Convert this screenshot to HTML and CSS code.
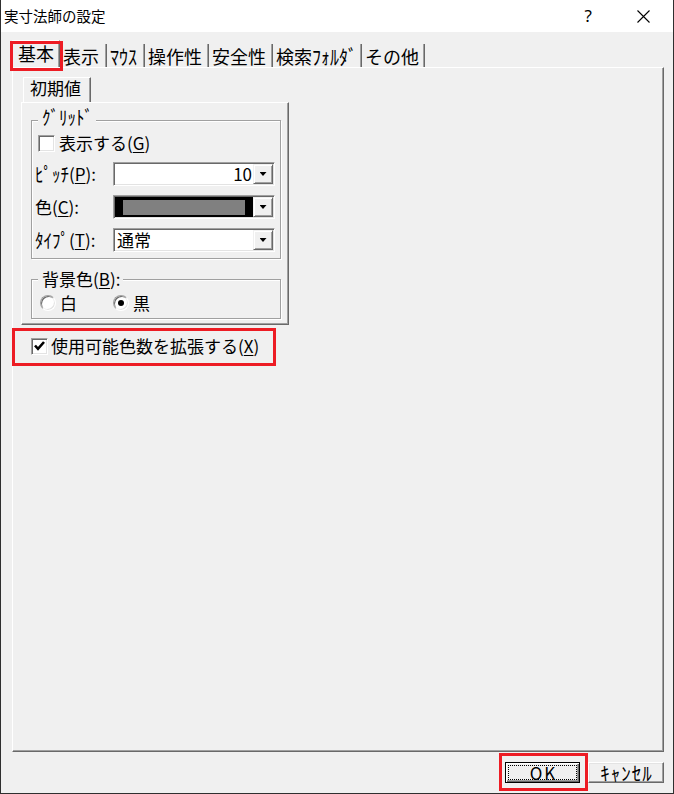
FILE: index.html
```html
<!DOCTYPE html>
<html lang="ja">
<head>
<meta charset="utf-8">
<title>実寸法師の設定</title>
<link rel="stylesheet" href="styles.css">
</head>
<body>
<div class="window">
  <div class="titlebar">
    <span class="title">実寸法師の設定</span>
    <span class="help">?</span>
    <svg class="close" width="13" height="13" viewBox="0 0 13 13"><path d="M0.5 0.5L12.5 12.5M12.5 0.5L0.5 12.5" stroke="#000" stroke-width="1.1" fill="none"/></svg>
  </div>
  <div class="client">
    <div class="tabs">
      <div class="tab active w-basic">基本</div>
      <div class="tab w-disp">表示</div>
      <div class="tab w-mouse"><span class="hw">ﾏｳｽ</span></div>
      <div class="tab w-op">操作性</div>
      <div class="tab w-safe">安全性</div>
      <div class="tab w-search">検索<span class="hw">ﾌｫﾙﾀﾞ</span></div>
      <div class="tab w-other">その他</div>
    </div>
    <div class="panel">
      <div class="subtabs"><div class="subtab">初期値</div></div>
      <div class="subpanel">
        <div class="group grid">
          <span class="group-label gl-grid"><span class="hw">ｸﾞﾘｯﾄﾞ</span></span>
          <div class="check-row">
            <span class="checkbox"></span><span class="check-text">表示する(<u>G</u>)</span>
          </div>
          <div class="field">
            <span class="flabel"><span class="hw">ﾋﾟｯﾁ</span>(<u>P</u>):</span>
            <div class="combo">
              <span class="value num">10</span>
              <span class="drop"></span>
            </div>
          </div>
          <div class="field">
            <span class="flabel">色(<u>C</u>):</span>
            <div class="combo">
              <span class="swatch"><span class="swatch-fill"></span></span>
              <span class="drop"></span>
            </div>
          </div>
          <div class="field">
            <span class="flabel"><span class="hw">ﾀｲﾌﾟ</span>(<u>T</u>):</span>
            <div class="combo">
              <span class="value">通常</span>
              <span class="drop"></span>
            </div>
          </div>
        </div>
        <div class="group bg">
          <span class="group-label gl-bg">背景色(<u>B</u>):</span>
          <div class="radio-row">
            <span class="opt opt-white"><span class="radio"></span><span class="opt-text">白</span></span>
            <span class="opt"><span class="radio on"></span><span class="opt-text">黒</span></span>
          </div>
        </div>
      </div>
      <div class="check-row ext">
        <span class="checkbox checked"><svg width="13" height="12" viewBox="0 0 13 12"><path d="M2 5.5L5 8.8L11 2" fill="none" stroke="#000" stroke-width="2.6"/></svg></span><span class="check-text">使用可能色数を拡張する(<u>X</u>)</span>
      </div>
    </div>
    <div class="buttons">
      <div class="btn ok">OK</div>
      <div class="btn cancel">ｷｬﾝｾﾙ</div>
    </div>
  </div>
  <div class="mark mark-tab"></div>
  <div class="mark mark-check"></div>
  <div class="mark mark-ok"></div>
</div>
</body>
</html>
```
FILE: styles.css
```css
* { box-sizing: border-box; }
html, body { margin: 0; padding: 0; }
body {
  width: 674px;
  height: 794px;
  overflow: hidden;
  background: #fff;
  font-family: "Noto Sans CJK JP", "Noto Sans", sans-serif;
  color: #000;
}
u { text-decoration-thickness: 1px; text-underline-offset: 2px; }
.hw { display: inline-block; transform: scaleY(1.15); }

.window {
  position: relative;
  width: 674px;
  height: 794px;
  border: 1px solid #2f2f2f;
  border-top: none;
  display: flex;
  flex-direction: column;
  background: #f0f0f0;
}

/* title bar */
.titlebar {
  flex: none;
  height: 32px;
  background: #fff;
  display: flex;
  align-items: center;
}
.title { margin-left: 3px; font-size: 14.5px; line-height: 20px; }
.help {
  margin-left: auto;
  margin-right: 45px;
  font-family: "Noto Sans", sans-serif;
  font-size: 17px;
  line-height: 20px;
}
.close { display: block; margin-right: 23px; }

/* client */
.client {
  flex: 1;
  padding: 8px 9px 0 11px;
  display: flex;
  flex-direction: column;
}

.tabs {
  flex: none;
  display: flex;
  align-items: flex-end;
  height: 27px;
  font-size: 18px;
}
.tab {
  height: 23px;
  padding: 2px 0 0 3px;
  line-height: 21px;
  white-space: nowrap;
  border-right: 1px solid #696969;
  box-shadow: inset -1px 0 0 #a0a0a0;
}
.tab.active {
  height: 27px;
  padding: 1px 0 0 5px;
  line-height: 22px;
  border-left: 1px solid #fff;
  border-top: 1px solid #fff;
}
.w-basic { width: 48px; }
.w-disp { width: 47px; }
.w-mouse { width: 38px; }
.w-op { width: 64px; }
.w-safe { width: 64px; }
.w-search { width: 89px; }
.w-other { width: 63px; }

.panel {
  flex: none;
  width: 652px;
  height: 685px;
  border: 1px solid;
  border-color: #fff #696969 #696969 #fff;
  box-shadow: inset -1px -1px 0 #a0a0a0;
  padding: 9px 0 0 8px;
  font-size: 17px;
}

.subtabs { display: flex; padding-left: 2px; height: 25px; }
.subtab {
  width: 68px;
  height: 25px;
  padding-left: 6px;
  line-height: 20px;
  border-left: 1px solid #fff;
  border-top: 1px solid #fff;
  border-right: 1px solid #696969;
  box-shadow: inset -1px 0 0 #a0a0a0;
}

.subpanel {
  width: 268px;
  border: 1px solid;
  border-color: #fff #696969 #696969 #fff;
  box-shadow: inset -1px -1px 0 #a0a0a0;
  padding: 17px 0 5px 9px;
}

.group {
  position: relative;
  width: 250px;
  border: 1px solid #a0a0a0;
  box-shadow: inset 1px 1px 0 #fff, 1px 1px 0 #fff;
}
.group-label {
  position: absolute;
  left: 6px;
  padding: 0 3px 0 4px;
  background: #f0f0f0;
  line-height: 20px;
  white-space: nowrap;
}
.gl-grid { top: -14px; }
.gl-bg { top: -11px; }

.grid {
  padding: 12px 0 6px 3px;
  display: flex;
  flex-direction: column;
  gap: 9px;
}
.bg {
  margin-top: 20px;
  padding: 14px 0 6px 3px;
}

.check-row {
  display: flex;
  align-items: center;
  height: 20px;
  line-height: 20px;
  white-space: nowrap;
}
.checkbox {
  flex: none;
  width: 17px;
  height: 17px;
  margin: 0 4px 0 3px;
  background: #fff;
  border: 1px solid;
  border-color: #a0a0a0 #fff #fff #a0a0a0;
  box-shadow: inset 1px 1px 0 #696969, inset -1px -1px 0 #e3e3e3;
  display: flex;
  align-items: center;
  justify-content: center;
}
.checkbox svg { display: block; }
.ext {
  margin-top: 12px;
  margin-left: 7px;
  height: 18px;
}
.ext .checkbox { margin-right: 3px; }

.field {
  display: flex;
  align-items: center;
  height: 24px;
}
.flabel { width: 78px; flex: none; line-height: 20px; white-space: nowrap; }

.combo {
  width: 162px;
  height: 24px;
  flex: none;
  border: 1px solid;
  border-color: #a0a0a0 #fff #fff #a0a0a0;
  box-shadow: inset 1px 1px 0 #696969, inset -1px -1px 0 #e3e3e3;
  background: #fff;
  padding: 1px;
  display: flex;
}
.value {
  flex: 1;
  line-height: 20px;
  padding-left: 2px;
  white-space: nowrap;
}
.value.num { text-align: right; padding: 0 1px 0 0; }
.swatch {
  flex: 1;
  background: #000;
  padding: 3px 8px 2px 8px;
  display: flex;
}
.swatch-fill { flex: 1; background: #808080; }

.drop {
  flex: none;
  width: 20px;
  height: 20px;
  background: #f0f0f0;
  border: 1px solid;
  border-color: #f0f0f0 #696969 #696969 #f0f0f0;
  box-shadow: inset 1px 1px 0 #fff, inset -1px -1px 0 #a0a0a0;
  display: flex;
  align-items: center;
  justify-content: center;
}
.drop::before {
  content: "";
  width: 7px;
  height: 4px;
  background: #000;
  clip-path: polygon(0 0, 100% 0, 50% 100%);
}

.radio-row {
  display: flex;
  align-items: center;
  height: 18px;
}
.opt { display: flex; align-items: center; line-height: 20px; }
.opt-white { width: 78px; padding-left: 5px; }
.radio {
  position: relative;
  flex: none;
  width: 16px;
  height: 16px;
  border-radius: 50%;
  background: #fff;
  border: 1px solid;
  border-color: #a0a0a0 #fff #fff #a0a0a0;
  box-shadow: inset 1px 1px 0 #696969, inset -1px -1px 0 #e3e3e3;
  margin-right: 4px;
}
.radio.on::after {
  content: "";
  position: absolute;
  left: 4px;
  top: 4px;
  width: 6px;
  height: 6px;
  border-radius: 50%;
  background: #000;
}

/* bottom buttons */
.buttons {
  flex: none;
  display: flex;
  justify-content: flex-end;
  gap: 8px;
  margin-top: 10px;
}
.btn {
  height: 21px;
  font-size: 17px;
  line-height: 19px;
  text-align: center;
  background: #f0f0f0;
  border: 1px solid;
  border-color: #fff #696969 #696969 #fff;
  box-shadow: inset -1px -1px 0 #a0a0a0, inset 1px 1px 0 #e3e3e3;
  white-space: nowrap;
}
.ok {
  position: relative;
  width: 75px;
  border-color: #000;
  box-shadow: inset 1px 1px 0 #fff, inset -1px -1px 0 #696969, inset -2px -2px 0 #a0a0a0;
  letter-spacing: 2px;
  padding-left: 2px;
}
.ok::after {
  content: "";
  position: absolute;
  left: 2px;
  top: 2px;
  right: 2px;
  bottom: 2px;
  border: 1px dotted #000;
}
.cancel { width: 76px; font-size: 19px; letter-spacing: 1px; padding-left: 1px; }

/* red annotation boxes */
.mark {
  position: absolute;
  border: 3px solid #ed1c24;
  pointer-events: none;
}
.mark-tab { left: 9px; top: 41px; width: 53px; height: 30px; }
.mark-check { left: 11px; top: 328px; width: 264px; height: 38px; }
.mark-ok { left: 498px; top: 753px; width: 89px; height: 38px; }
```
